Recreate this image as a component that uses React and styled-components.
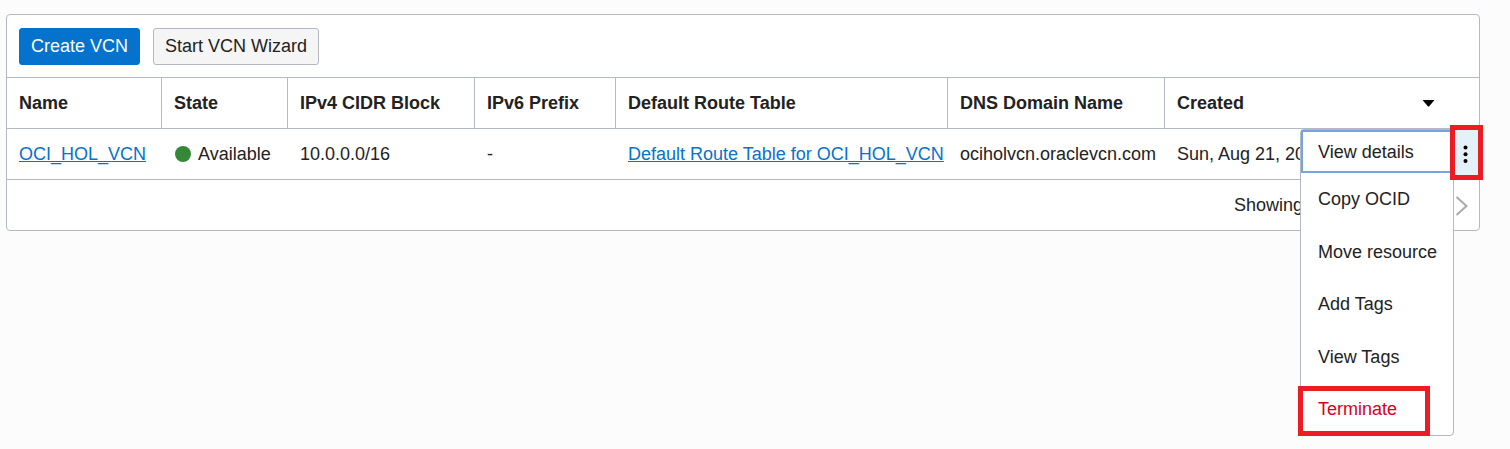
import React from 'react';
import styled, { createGlobalStyle, css } from 'styled-components';

const line = '#b3b8c3';
const blue = '#0572ce';
const alertRed = '#ed1c24';

const GlobalStyle = createGlobalStyle`
  * { box-sizing: border-box; }
  body {
    margin: 0;
    background: #fcfcfc;
    color: #222;
    font: 18px/24px "Liberation Sans", Arial, sans-serif;
  }
  button { font: inherit; color: inherit; cursor: pointer; }
`;

const Page = styled.main`
  min-height: 100vh;
  padding: 14px 30px 14px 6px;
`;

const Panel = styled.section`
  border: 1px solid ${line};
  border-radius: 4px;
  background: #fff;
`;

const Toolbar = styled.div`
  display: flex;
  gap: 13px;
  padding: 13px 12px 12px;
  border-bottom: 1px solid ${line};
`;

const Button = styled.button`
  height: 37px;
  padding: 0 11px 1px;
  border: 1px solid ${(p) => (p.$primary ? blue : line)};
  border-radius: 3px;
  background: ${(p) => (p.$primary ? blue : '#f5f5f5')};
  && { color: ${(p) => (p.$primary ? '#fff' : '#222')}; }
`;

const Table = styled.table`
  width: 100%;
  table-layout: fixed;
  border-collapse: separate;
  border-spacing: 0;
`;

const Col = styled.col`
  width: ${(p) => (p.$width ? `${p.$width}px` : 'auto')};
`;

const cell = css`
  height: 51px;
  padding: 0 0 0 12px;
  border-bottom: 1px solid ${line};
  text-align: left;
  white-space: nowrap;
`;

const HeadCell = styled.th`
  ${cell}
  & + & { border-left: 1px solid ${line}; }
`;

const Cell = styled.td`
  ${cell}
  & + & { padding-left: 13px; }
`;

const ActionCell = styled.td`
  position: relative;
  padding: 0;
  border-bottom: 1px solid ${line};
`;

const SortHeader = styled.div`
  display: flex;
  align-items: center;
  justify-content: space-between;
  padding-right: 44px;
`;

const Link = styled.a`
  color: ${blue};
  text-decoration: underline 1px;
`;

const Status = styled.span`
  display: flex;
  align-items: center;
  gap: 7px;
  padding-left: 1px;
`;

const Dot = styled.span`
  width: 16px;
  height: 16px;
  border-radius: 50%;
  background: #368737;
`;

const KebabButton = styled.button`
  display: flex;
  align-items: center;
  justify-content: center;
  width: 100%;
  height: 50px;
  padding: 0 2px 0 0;
  border: 0;
  background: #e4f1fb;
`;

const Menu = styled.div`
  position: absolute;
  top: 0;
  right: 100%;
  z-index: 1;
  width: 154px;
  border: 1px solid ${line};
  border-radius: 4px;
  background: #fff;
`;

const MenuItem = styled.button`
  display: block;
  position: relative;
  width: 100%;
  height: 52px;
  padding: 0 17px;
  border: 0;
  background: transparent;
  text-align: left;
  white-space: nowrap;
  && { color: ${(p) => (p.$danger ? '#d9001b' : '#222')}; }
  &:nth-child(2n + 3) { margin-top: 1px; }
  ${(p) =>
    p.$focused &&
    css`
      height: 43px;
      padding: 0 15px;
      border: 2px solid #74a5de;
    `}
`;

const Callout = styled.span`
  position: absolute;
  z-index: 2;
  inset: ${(p) => p.$inset};
  border: 5px solid ${alertRed};
  pointer-events: none;
`;

const Footer = styled.footer`
  display: flex;
  align-items: center;
  justify-content: flex-end;
  height: 50px;
  padding-right: 11px;
`;

const Summary = styled.span`
  width: 220px;
`;

const PageButton = styled.button`
  display: flex;
  padding: 2px 0 0;
  border: 0;
  background: transparent;
`;

const columns = [
  ['Name', 154],
  ['State', 126],
  ['IPv4 CIDR Block', 187],
  ['IPv6 Prefix', 141],
  ['Default Route Table', 332],
  ['DNS Domain Name', 217],
];

export default function App() {
  return (
    <Page>
      <GlobalStyle />
      <Panel>
        <Toolbar>
          <Button $primary>Create VCN</Button>
          <Button>Start VCN Wizard</Button>
        </Toolbar>
        <Table>
          <colgroup>
            {columns.map(([name, width]) => (
              <Col key={name} $width={width} />
            ))}
            <Col />
            <Col $width={25} />
          </colgroup>
          <thead>
            <tr>
              {columns.map(([name]) => (
                <HeadCell key={name}>{name}</HeadCell>
              ))}
              <HeadCell colSpan={2} aria-sort="descending">
                <SortHeader>
                  Created
                  <svg width="13" height="7" viewBox="0 0 13 7" aria-hidden="true">
                    <path d="M0.5 0h12L7 6.5H6z" fill="#000" />
                  </svg>
                </SortHeader>
              </HeadCell>
            </tr>
          </thead>
          <tbody>
            <tr>
              <Cell><Link href="#vcn">OCI_HOL_VCN</Link></Cell>
              <Cell><Status><Dot />Available</Status></Cell>
              <Cell>10.0.0.0/16</Cell>
              <Cell>-</Cell>
              <Cell><Link href="#route-table">Default Route Table for OCI_HOL_VCN</Link></Cell>
              <Cell>ociholvcn.oraclevcn.com</Cell>
              <Cell>Sun, Aug 21, 20</Cell>
              <ActionCell>
                <KebabButton aria-label="Actions" aria-expanded="true">
                  <svg width="5" height="18" viewBox="0 0 5 18" aria-hidden="true">
                    <circle cx="2.5" cy="2.5" r="2" />
                    <circle cx="2.5" cy="9.2" r="2" />
                    <circle cx="2.5" cy="15.9" r="2" />
                  </svg>
                </KebabButton>
                <Menu role="menu">
                  <MenuItem role="menuitem" $focused>View details</MenuItem>
                  <MenuItem role="menuitem">Copy OCID</MenuItem>
                  <MenuItem role="menuitem">Move resource</MenuItem>
                  <MenuItem role="menuitem">Add Tags</MenuItem>
                  <MenuItem role="menuitem">View Tags</MenuItem>
                  <MenuItem role="menuitem" $danger>
                    Terminate
                    <Callout $inset="3px 23px -1px -3px" />
                  </MenuItem>
                </Menu>
                <Callout $inset="-4px -4px -1px -4px" />
              </ActionCell>
            </tr>
          </tbody>
        </Table>
        <Footer>
          <Summary>Showing</Summary>
          <PageButton aria-label="Next page">
            <svg width="14" height="22" viewBox="0 0 14 22" fill="none" stroke="#aaa" strokeWidth="2" aria-hidden="true">
              <path d="M2.5 2l10 9-10 9" />
            </svg>
          </PageButton>
        </Footer>
      </Panel>
    </Page>
  );
}
